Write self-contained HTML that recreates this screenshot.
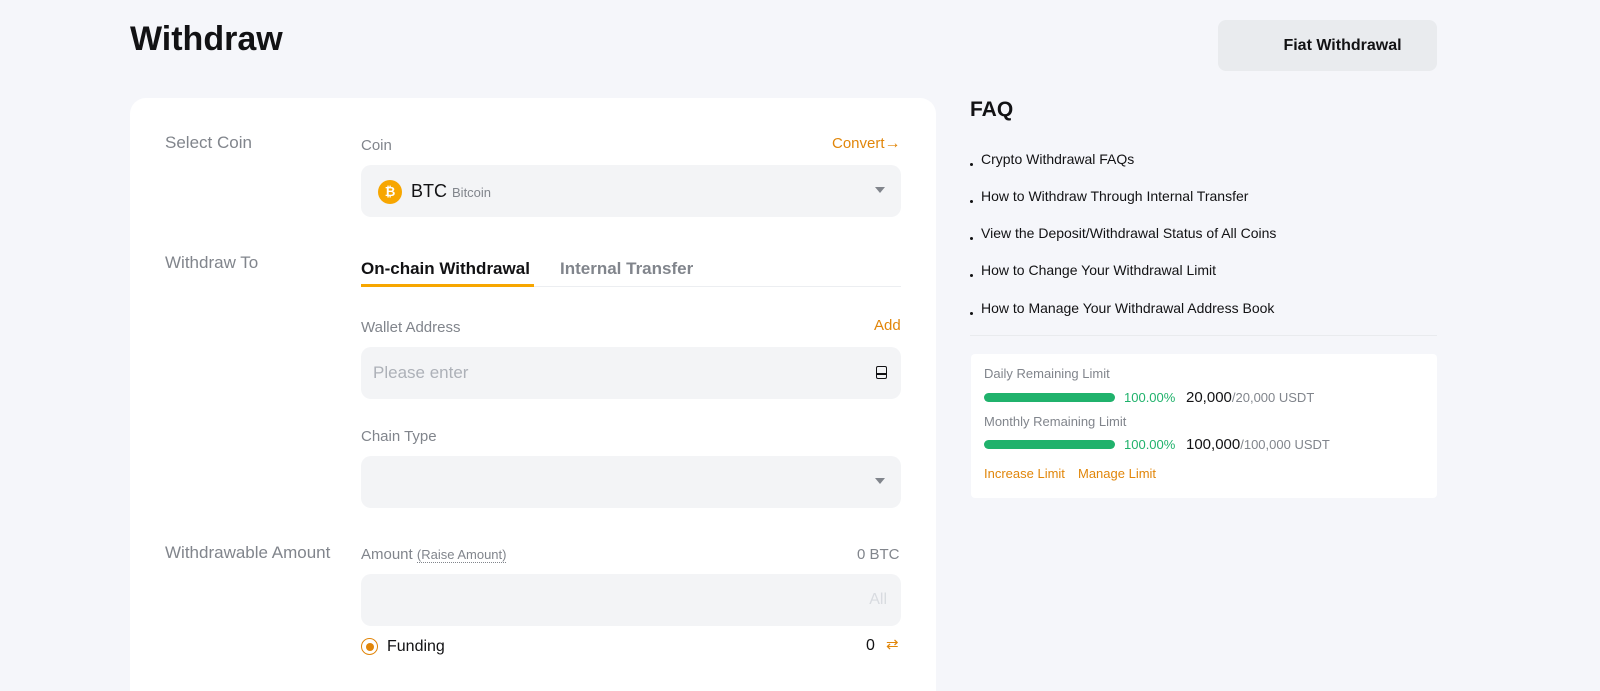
<!DOCTYPE html>
<html style="overflow:hidden"><head><style>
*{margin:0;padding:0;box-sizing:border-box}
html,body{width:1600px;height:691px;overflow:hidden}
body{background:#f5f6fa;font-family:"Liberation Sans",Arial,sans-serif;position:relative;color:#121214}
.a{position:absolute}
.lbl{color:#81858c;font-size:16px}
.sm{color:#81858c;font-size:14px}
.field{position:absolute;left:361px;width:540px;height:52px;background:#f3f4f6;border-radius:10px}
.or{color:#e1860a}
.tri{position:absolute;right:16px;top:22px;width:0;height:0;border-left:5px solid transparent;border-right:5px solid transparent;border-top:6px solid #81858c}
.faq{position:absolute;left:970px;font-size:14px;color:#121214}
.faq:before{content:"";display:inline-block;width:3px;height:3px;background:#121214;border-radius:50%;margin-right:8px;vertical-align:-2px}
.bar{position:absolute;left:984px;width:131px;height:9px;border-radius:5px;background:#20b26c}
</style></head><body>
<div class="a" style="left:130px;top:20px;font-size:34px;font-weight:bold">Withdraw</div>
<div class="a" style="left:1218px;top:20px;width:219px;height:51px;background:#e9ebee;border-radius:8px;font-size:16px;font-weight:bold;text-align:center;line-height:51px;padding-left:30px">Fiat Withdrawal</div>

<div class="a" style="left:130px;top:98px;width:806px;height:593px;background:#fff;border-radius:16px 16px 0 0"></div>
<div class="a lbl" style="left:165px;top:133px;font-size:17px">Select Coin</div>
<div class="a lbl" style="left:165px;top:253px;font-size:17px">Withdraw To</div>
<div class="a lbl" style="left:165px;top:543px;font-size:17px">Withdrawable Amount</div>

<div class="a lbl" style="left:361px;top:137px;font-size:15px">Coin</div>
<div class="a or" style="left:832px;top:135px;font-size:15px">Convert<span style="font-size:16px">→</span></div>
<div class="field" style="top:165px">
 <div class="a" style="left:17px;top:15px;width:24px;height:24px;border-radius:50%;background:#f7a600;color:#fff;font-size:13px;font-weight:bold;text-align:center;line-height:24px">₿</div>
 <div class="a" style="left:50px;top:16px;font-size:18px">BTC <span style="font-size:13px;color:#81858c">Bitcoin</span></div>
 <div class="tri"></div>
</div>

<div class="a" style="left:361px;top:259px;font-size:17px;font-weight:bold">On-chain Withdrawal</div>
<div class="a" style="left:560px;top:259px;font-size:17px;font-weight:bold;color:#81858c">Internal Transfer</div>
<div class="a" style="left:361px;top:286px;width:540px;height:1px;background:#eceef1"></div>
<div class="a" style="left:361px;top:284px;width:173px;height:3px;background:#f7a600"></div>

<div class="a lbl" style="left:361px;top:319px;font-size:15px">Wallet Address</div>
<div class="a or" style="left:874px;top:317px;font-size:15px">Add</div>
<div class="field" style="top:347px">
 <div class="a" style="left:12px;top:16px;font-size:17px;color:#adb1b8">Please enter</div>
 <div class="a" style="left:515px;top:19px;width:11px;height:13px;border:1.5px solid #121214;border-radius:2px"><div style="margin-top:6px;height:1.5px;background:#121214"></div></div>
</div>

<div class="a lbl" style="left:361px;top:428px;font-size:15px">Chain Type</div>
<div class="field" style="top:456px"><div class="tri"></div></div>

<div class="a lbl" style="left:361px;top:546px;font-size:15px">Amount <span style="font-size:13px;border-bottom:1px dotted #81858c">(Raise Amount)</span></div>
<div class="a lbl" style="left:857px;top:546px;font-size:15px">0 BTC</div>
<div class="field" style="top:574px"><div class="a" style="right:14px;top:17px;font-size:16px;color:#d8dbe0">All</div></div>
<div class="a" style="left:361px;top:638px;width:17px;height:17px;border:1px solid #e1860a;border-radius:50%"><div style="margin:3.5px;width:8px;height:8px;border-radius:50%;background:#e1860a"></div></div>
<div class="a" style="left:387px;top:638px;font-size:16px">Funding</div>
<div class="a" style="left:866px;top:637px;font-size:16px">0</div>
<div class="a or" style="left:886px;top:635px;font-size:15px">⇄</div>

<div class="a" style="left:970px;top:98px;font-size:21px;font-weight:bold">FAQ</div>
<div class="faq" style="top:151px">Crypto Withdrawal FAQs</div>
<div class="faq" style="top:188px">How to Withdraw Through Internal Transfer</div>
<div class="faq" style="top:225px">View the Deposit/Withdrawal Status of All Coins</div>
<div class="faq" style="top:262px">How to Change Your Withdrawal Limit</div>
<div class="faq" style="top:300px">How to Manage Your Withdrawal Address Book</div>
<div class="a" style="left:970px;top:335px;width:467px;height:1px;background:#e9ebee"></div>

<div class="a" style="left:971px;top:354px;width:466px;height:144px;background:#fff;border-radius:4px"></div>
<div class="a sm" style="left:984px;top:366px;font-size:13px">Daily Remaining Limit</div>
<div class="bar" style="top:393px"></div>
<div class="a" style="left:1124px;top:390px;font-size:13px;color:#20b26c">100.00%</div>
<div class="a" style="left:1186px;top:389px;font-size:15px">20,000<span style="font-size:13px;color:#81858c">/20,000 USDT</span></div>
<div class="a sm" style="left:984px;top:414px;font-size:13px">Monthly Remaining Limit</div>
<div class="bar" style="top:440px"></div>
<div class="a" style="left:1124px;top:437px;font-size:13px;color:#20b26c">100.00%</div>
<div class="a" style="left:1186px;top:436px;font-size:15px">100,000<span style="font-size:13px;color:#81858c">/100,000 USDT</span></div>
<div class="a or" style="left:984px;top:466px;font-size:13px">Increase Limit</div>
<div class="a or" style="left:1078px;top:466px;font-size:13px">Manage Limit</div>
</body></html>
